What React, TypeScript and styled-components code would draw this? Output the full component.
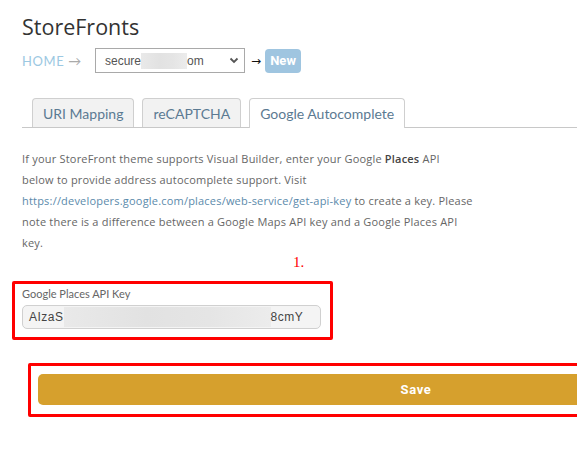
import React from "react";
import styled, { createGlobalStyle } from "styled-components";

const GlobalStyle = createGlobalStyle`
  html, body {
    margin: 0;
    padding: 0;
    background: #fff;
    overflow: hidden;
  }
  body {
    font-family: "Open Sans", "Liberation Sans", sans-serif;
    color: #555;
  }
`;

const Page = styled.div`
  width: 900px;
  padding: 12px 0 0 22px;
  box-sizing: border-box;
`;

const Title = styled.h1`
  margin: 0;
  font-family: "Open Sans", sans-serif;
  font-weight: 400;
  font-size: 21.5px;
  line-height: 30px;
  color: #333;
`;

const Crumbs = styled.div`
  display: flex;
  align-items: center;
  margin-top: 6px;
  height: 25px;
`;

const Home = styled.span`
  font-family: "Lato", sans-serif;
  font-size: 13px;
  letter-spacing: 0.6px;
  color: #9cc8e2;
  width: 73px;
`;

const HomeArrow = styled.span`
  color: #aaa;
  margin-left: 4px;
`;

const Select = styled.div`
  width: 150px;
  height: 25px;
  box-sizing: border-box;
  border: 1px solid #a9a9a9;
  display: flex;
  align-items: center;
  padding: 0 5px 0 9px;
  font-family: "Liberation Sans", Arial, sans-serif;
  font-size: 12px;
  color: #555;
`;

const Blur = styled.span<{ w: number; h?: number }>`
  display: inline-block;
  width: ${(p) => p.w}px;
  height: ${(p) => p.h ?? 16}px;
  background: linear-gradient(90deg, #e9e9e9, #e2e2e2 40%, #e5e5e5 70%, #ececec);
`;

const Chevron = styled.svg`
  margin-left: auto;
`;

const Arrow = styled.span`
  color: #111;
  margin: 0 4px 0 6px;
  font-family: "DejaVu Sans", sans-serif;
  font-size: 12px;
`;

const Badge = styled.span`
  background: #9fc5e0;
  color: #fff;
  font-family: "Roboto", sans-serif;
  font-weight: 700;
  font-size: 13px;
  border-radius: 4px;
  height: 24px;
  width: 36px;
  display: flex;
  align-items: center;
  justify-content: center;
`;

const Tabs = styled.div`
  display: flex;
  gap: 8px;
  margin-top: 25px;
  padding-left: 10px;
  border-bottom: 1px solid #c8c8c8;
`;

const Tab = styled.div<{ active?: boolean }>`
  box-sizing: border-box;
  padding: 0 10px;
  display: flex;
  align-items: center;
  border: 1px solid #cfcfcf;
  border-bottom: none;
  border-radius: 4px 4px 0 0;
  background: ${(p) => (p.active ? "#fff" : "#f2f2f2")};
  margin-bottom: ${(p) => (p.active ? "-1px" : "0")};
  height: ${(p) => (p.active ? "30px" : "29px")};
  font-family: "Lato", sans-serif;
  font-size: 14px;
  color: #5b7a92;
`;

const Text = styled.p`
  margin: 20px 0 0;
  width: 540px;
  font-family: "Open Sans", sans-serif;
  font-size: 11px;
  letter-spacing: 0.2px;
  line-height: 21px;
  color: #666;

  b {
    font-weight: 600;
    color: #444;
  }
  a {
    color: #5b8aab;
    text-decoration: none;
  }
`;

const Marker = styled.div`
  margin: 0 0 0 271px;
  font-family: "Liberation Serif", serif;
  font-size: 15px;
  line-height: 18px;
  color: #f00;
`;

const Callout = styled.div<{ w: number; ml: number }>`
  border: 3px solid #f00;
  border-radius: 2px;
  width: ${(p) => p.w}px;
  margin-left: ${(p) => p.ml}px;
  box-sizing: border-box;
`;

const FieldBox = styled(Callout)`
  margin-top: 10px;
  padding: 2px 9px 8px 7px;
`;

const Label = styled.div`
  font-family: "Lato", sans-serif;
  font-size: 11px;
  color: #666;
  line-height: 15px;
`;

const Input = styled.div`
  margin-top: 4px;
  height: 24px;
  box-sizing: border-box;
  border: 1px solid #d0d0d0;
  border-radius: 5px;
  background: #f4f4f4;
  display: flex;
  align-items: center;
  padding-left: 6px;
  font-family: "Liberation Sans", Arial, sans-serif;
  font-size: 12px;
  letter-spacing: 0.5px;
  color: #444;
`;

const SaveBox = styled(Callout)`
  margin-top: 23px;
  padding: 8px 0 9px 7px;
`;

const SaveButton = styled.div`
  width: 756px;
  height: 31px;
  border-radius: 5px;
  background: #d6a02d;
  color: #fff;
  display: flex;
  align-items: center;
  justify-content: center;
  font-family: "Roboto", sans-serif;
  font-weight: 700;
  font-size: 13px;
  letter-spacing: 0.6px;
`;

export default function App() {
  return (
    <>
      <GlobalStyle />
      <Page>
        <Title>StoreFronts</Title>
        <Crumbs>
          <Home>
            HOME<HomeArrow>→</HomeArrow>
          </Home>
          <Select>
            secure<Blur w={46} />om
            <Chevron width="10" height="7" viewBox="0 0 10 7">
              <path d="M1.5 1.5 L5 5 L8.5 1.5" fill="none" stroke="#555" strokeWidth="1.8" />
            </Chevron>
          </Select>
          <Arrow>→</Arrow>
          <Badge>New</Badge>
        </Crumbs>

        <Tabs>
          <Tab>URI Mapping</Tab>
          <Tab>reCAPTCHA</Tab>
          <Tab active>Google Autocomplete</Tab>
        </Tabs>

        <Text>
          If your StoreFront theme supports Visual Builder, enter your Google <b>Places</b> API
          <br />
          below to provide address autocomplete support. Visit
          <br />
          <a href="#">https://developers.google.com/places/web-service/get-api-key</a> to create a
          key. Please
          <br />
          note there is a difference between a Google Maps API key and a Google Places API
          <br />
          key.
        </Text>

        <Marker>1.</Marker>

        <FieldBox w={321} ml={-10}>
          <Label>Google Places API Key</Label>
          <Input>
            AIzaS<Blur w={207} h={20} />8cmY
          </Input>
        </FieldBox>

        <SaveBox w={780} ml={6}>
          <SaveButton>Save</SaveButton>
        </SaveBox>
      </Page>
    </>
  );
}
